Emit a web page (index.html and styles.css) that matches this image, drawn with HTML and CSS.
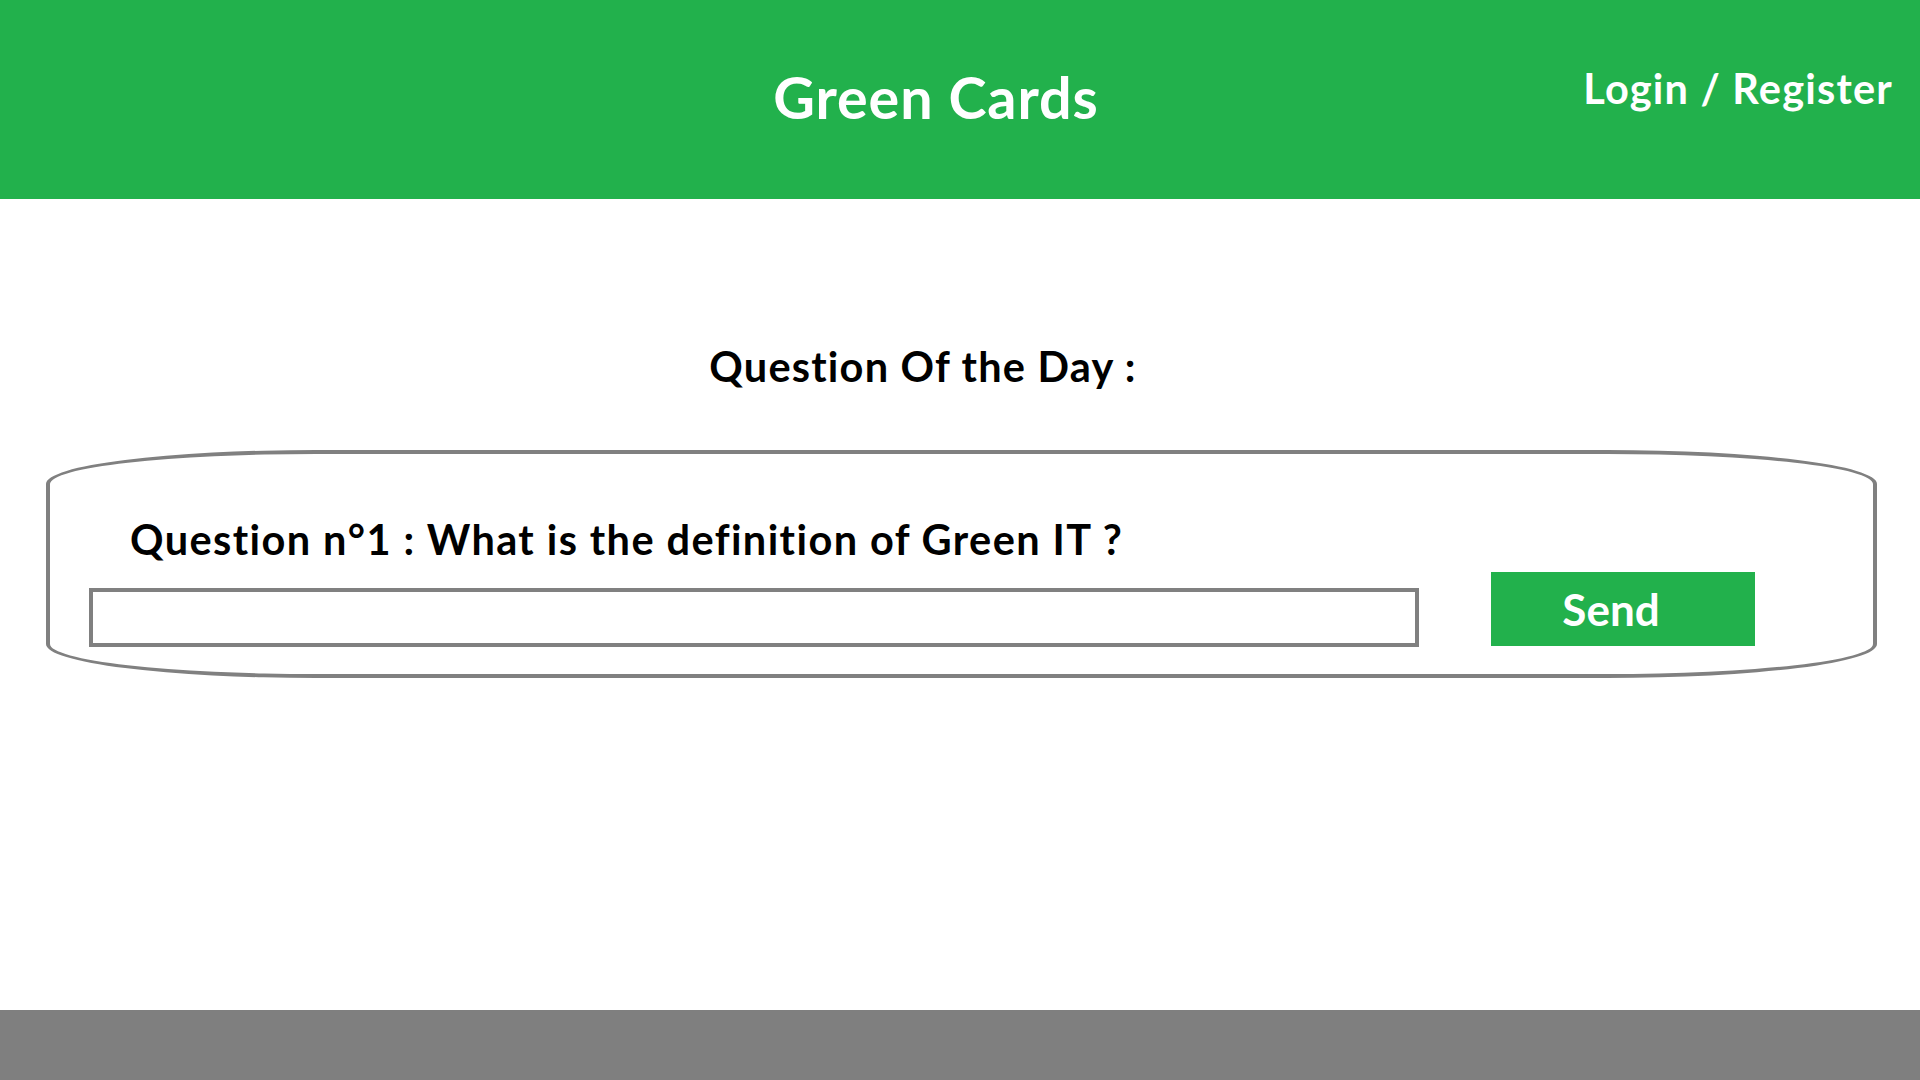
FILE: index.html
```html
<!DOCTYPE html>
<html lang="en">
<head>
<meta charset="utf-8">
<title>Green Cards</title>
<link rel="stylesheet" href="styles.css">
</head>
<body>
<header class="topbar">
  <div class="spacer"></div>
  <h1 class="brand">Green Cards</h1>
  <a class="auth" href="#">Login / Register</a>
</header>
<main class="content">
  <h2 class="qotd">Question Of the Day :</h2>
  <section class="card">
    <p class="question">Question n°1 : What is the definition of Green IT ?</p>
    <div class="answer-row">
      <input class="answer" type="text" aria-label="Answer">
      <button class="send" type="button">Send</button>
    </div>
  </section>
</main>
<footer class="footer"></footer>
</body>
</html>
```
FILE: styles.css
```css
* { box-sizing: border-box; }
html, body { margin: 0; padding: 0; }
body {
  width: 1920px;
  height: 1080px;
  display: flex;
  flex-direction: column;
  font-family: Lato, "Open Sans", sans-serif;
  font-weight: 700;
  background: #ffffff;
  color: #000000;
  overflow: hidden;
}
.topbar {
  height: 199px;
  flex: 0 0 199px;
  background: #22b14c;
  display: grid;
  grid-template-columns: 1fr auto 1fr;
  align-items: start;
  padding: 68px 48px 0 0;
}
.brand {
  margin: 0;
  font-size: 57.5px;
  line-height: 1;
  font-weight: 700;
  letter-spacing: 0.9px;
  color: #ffffff;
}
.auth {
  justify-self: end;
  margin-right: -21px;
  font-size: 41.5px;
  line-height: 1;
  letter-spacing: 1.2px;
  color: #ffffff;
  text-decoration: none;
}
.content {
  flex: 1;
  display: flex;
  flex-direction: column;
}
.qotd {
  margin: 147px 0 0 0;
  padding-right: 74px;
  text-align: center;
  font-size: 41.5px;
  line-height: 1;
  letter-spacing: 1.2px;
  font-weight: 700;
}
.card {
  margin: 62px 0 0 46px;
  width: 1831px;
  height: 228px;
  border: 4px solid #808080;
  border-radius: 270px / 34px;
  padding: 64px 0 0 39px;
}
.question {
  margin: 0 0 0 41px;
  font-size: 41.5px;
  line-height: 42px;
  letter-spacing: 1.4px;
}
.answer-row {
  margin-top: 12px;
  display: flex;
  align-items: flex-end;
  gap: 72px;
}
.answer {
  width: 1330px;
  height: 59px;
  margin: 0 0 -1px 0;
  border: 4px solid #808080;
  background: #ffffff;
  font: inherit;
  outline: none;
}
.send {
  width: 264px;
  height: 74px;
  border: 0;
  background: #22b14c;
  color: #ffffff;
  font-family: inherit;
  font-weight: 700;
  font-size: 44px;
  line-height: 1;
  padding: 0 24px 0 0;
  display: flex;
  align-items: center;
  justify-content: center;
}
.footer {
  height: 70px;
  flex: 0 0 70px;
  background: #7f7f7f;
}
```
